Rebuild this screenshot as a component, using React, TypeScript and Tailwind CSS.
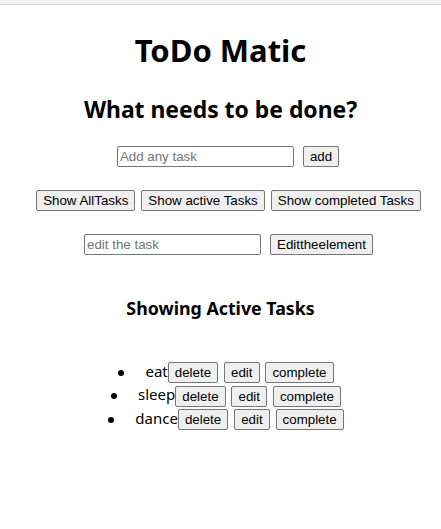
const tasks = ['eat', 'sleep', 'dance']

const btn =
  'bg-[#efefef] border border-[#767676] rounded-[2px] px-[6px] h-[21px] text-[13.33px] leading-[15px] text-black'
const input =
  'border border-[#767676] rounded-[2px] px-[2px] h-[21px] text-[13.33px] placeholder:text-[#757575] outline-none'

export default function App() {
  return (
    <div className="min-h-[529px] bg-white text-black font-['Noto_Sans',sans-serif]">
      <div className="h-[5px] bg-[#f3f3f3] border-b border-[#d4d4d4]" />

      <h1 className="mt-[24px] text-center text-[31px] leading-[42px] font-bold">ToDo Matic</h1>
      <h2 className="mt-[23px] text-center text-[22.9px] leading-[32px] font-bold">What needs to be done?</h2>

      <div className="mt-[20px] flex justify-center gap-[9px] pl-[15px] font-['Liberation_Sans',sans-serif]">
        <input className={`${input} w-[177px]`} placeholder="Add any task" />
        <button className={btn}>add</button>
      </div>

      <div className="mt-[23px] flex justify-center gap-[6px] pl-[16px] font-['Liberation_Sans',sans-serif]">
        <button className={btn}>Show AllTasks</button>
        <button className={`${btn} bg-[#e5e5e5]`}>Show active Tasks</button>
        <button className={btn}>Show completed Tasks</button>
      </div>

      <div className="mt-[23px] flex justify-center gap-[9px] pl-[16px] font-['Liberation_Sans',sans-serif]">
        <input className={`${input} w-[177px]`} placeholder="edit the task" />
        <button className={btn}>Edittheelement</button>
      </div>

      <h3 className="mt-[41px] text-center text-[17.8px] leading-[25px] font-bold">Showing Active Tasks</h3>

      <ul className="mt-[39px] pl-[38px] text-center text-[15px]">
        {tasks.map((t) => (
          <li key={t} className="leading-[23px]">
            <span className="relative">
              <span className="absolute right-[calc(100%+21px)] top-[9px] w-[6px] h-[6px] rounded-full bg-black" />
              {t}
            </span>
            <button className={`${btn} font-['Liberation_Sans',sans-serif] align-middle`}>delete</button>{' '}
            <button className={`${btn} ml-[2px] font-['Liberation_Sans',sans-serif] align-middle`}>edit</button>{' '}
            <button className={`${btn} ml-[2px] font-['Liberation_Sans',sans-serif] align-middle`}>complete</button>
          </li>
        ))}
      </ul>
    </div>
  )
}
